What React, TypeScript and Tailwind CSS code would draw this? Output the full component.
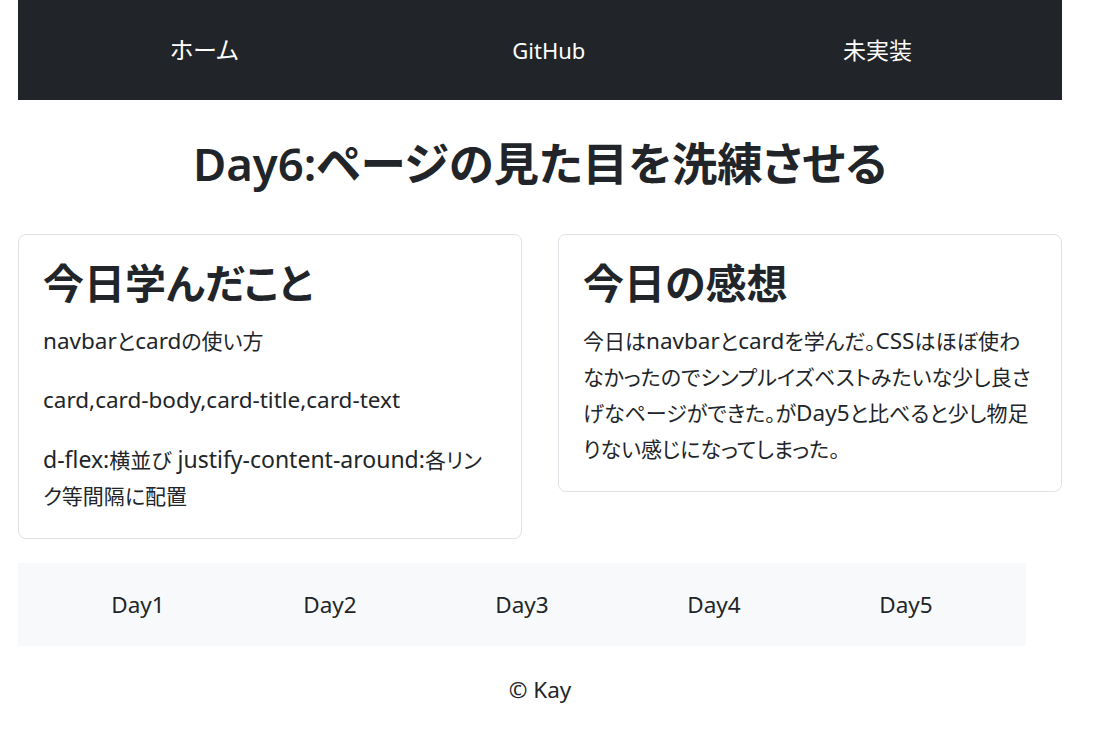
const font = "font-['Noto_Sans','Noto_Sans_CJK_JP',sans-serif]";

const footerLinks = ["Day1", "Day2", "Day3", "Day4", "Day5"];

// latin runs are set a bit larger than the kana/kanji, like the original page's font
function Mixed({ text, wide }: { text: string; wide?: boolean }) {
  const parts = text.split(/([A-Za-z0-9,.:\- ]+)/);
  return (
    <>
      {parts.map((p, i) =>
        /^[A-Za-z0-9,.:\- ]+$/.test(p) ? (
          <span key={i} className={wide ? "text-[23px]" : "text-[22.5px]"}>
            {p}
          </span>
        ) : (
          <span key={i}>{p}</span>
        )
      )}
    </>
  );
}

export default function App() {
  return (
    <div className={`${font} min-h-screen bg-white px-[18px] text-[#212529] [font-feature-settings:'palt']`}>
      <nav className="flex h-[100px] w-[1044px] items-center justify-between bg-[#212529] pr-[150px] pl-[152px] text-white">
        <a className="mr-4 text-[24px]">ホーム</a>
        <a className="text-[22px]">GitHub</a>
        <a className="text-[23px]">未実装</a>
      </nav>

      <h1 className="mt-[33px] mb-[41px] w-[1044px] text-center text-[45.5px] leading-[60px] font-semibold">
        Day6:ページの見た目を洗練させる
      </h1>

      <div className="grid w-[1044px] grid-cols-2 items-start gap-9 text-[21px] leading-[36px]">
        <div className="rounded-lg border border-[#dee2e6] p-6">
          <h2 className="mb-4 text-[41px] leading-[48px] font-semibold">今日学んだこと</h2>
          <p className="mb-[23px]">
            <Mixed text="navbarとcardの使い方" />
          </p>
          <p className="mb-[23px]">
            <Mixed text="card,card-body,card-title,card-text" />
          </p>
          <p>
            <Mixed wide text="d-flex:横並び justify-content-around:各リンク等間隔に配置" />
          </p>
        </div>
        <div className="rounded-lg border border-[#dee2e6] p-6">
          <h2 className="mb-4 text-[41px] leading-[48px] font-semibold">今日の感想</h2>
          <p>
            <Mixed text="今日はnavbarとcardを学んだ。CSSはほぼ使わなかったのでシンプルイズベストみたいな少し良さげなページができた。がDay5と比べると少し物足りない感じになってしまった。" />
          </p>
        </div>
      </div>

      <div className="mt-6 flex h-[83px] w-[1008px] items-center justify-around bg-[#f8f9fa] px-6">
        {footerLinks.map((d) => (
          <a key={d} className="text-[22.5px]">
            {d}
          </a>
        ))}
      </div>

      <footer className="w-[1044px] py-[29px] text-center text-[22.5px] leading-[30px]">© Kay</footer>
    </div>
  );
}
